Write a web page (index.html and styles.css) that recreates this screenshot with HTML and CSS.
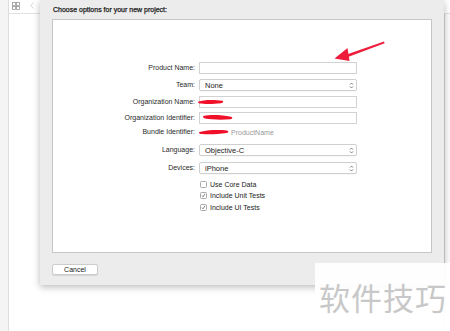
FILE: index.html
```html
<!DOCTYPE html>
<html>
<head>
<meta charset="utf-8">
<link rel="stylesheet" href="styles.css">
</head>
<body>
<div class="app">
  <div class="sidebar"></div>
  <div class="main">
    <div class="toolbar">
      <svg class="grid-icon" width="8" height="8" viewBox="0 0 8 8"><rect x="0.5" y="0.5" width="3" height="3" fill="none" stroke="#9a9a9a" stroke-width="0.8"/><rect x="4.5" y="0.5" width="3" height="3" fill="none" stroke="#9a9a9a" stroke-width="0.8"/><rect x="0.5" y="4.5" width="3" height="3" fill="none" stroke="#9a9a9a" stroke-width="0.8"/><rect x="4.5" y="4.5" width="3" height="3" fill="none" stroke="#9a9a9a" stroke-width="0.8"/></svg>
      <svg class="back-icon" width="4" height="7" viewBox="0 0 4 7"><path d="M3.5 0.5 L0.8 3.5 L3.5 6.5" fill="none" stroke="#cfcfcf" stroke-width="0.9"/></svg>
    </div>
    <div class="content">
      <div class="pane"></div>
      <div class="right-pane"></div>
    </div>
  </div>
</div>

<div class="sheet">
  <div class="sheet-title">Choose options for your new project:</div>
  <div class="options">
    <div class="form">
      <label class="lbl">Product Name:</label>
      <div class="field"></div>

      <label class="lbl">Team:</label>
      <div class="popup"><span>None</span><svg class="updown" width="5" height="7" viewBox="0 0 5 7"><path d="M1 2.6 L2.5 1 L4 2.6 M1 4.4 L2.5 6 L4 4.4" fill="none" stroke="#555" stroke-width="0.7"/></svg></div>

      <label class="lbl">Organization Name:</label>
      <div class="field scribbled"><svg class="scribble s1" width="28" height="8" viewBox="0 0 28 8"><path d="M1.5 3.6 C6 1.6 18 1.6 25.5 2.8 C27 3.6 26 5 24 5.2 C16 6.2 6 6 2.5 5.4 C1 5.1 0.8 4.2 1.5 3.6 Z" fill="#f0102a"/></svg></div>

      <label class="lbl">Organization Identifier:</label>
      <div class="field scribbled"><svg class="scribble s2" width="32" height="9" viewBox="0 0 32 9"><path d="M1.5 3 C8 1.4 20 1.8 29 3.8 C31 4.4 30.5 6 28.5 6.2 C20 7 9 6.6 3 5.6 C1 5.2 0.6 3.6 1.5 3 Z" fill="#f0102a"/></svg></div>

      <label class="lbl">Bundle Identifier:</label>
      <div class="bundle"><svg class="scribble-inline" width="32" height="8" viewBox="0 0 32 8"><path d="M1.5 4 C8 1.8 20 1.5 29 2.4 C31 3 30.6 4.6 28.6 5 C20 6.4 9 6.4 3 6 C1 5.8 0.6 4.6 1.5 4 Z" fill="#f0102a"/></svg><span class="bundle-name">ProductName</span></div>

      <label class="lbl">Language:</label>
      <div class="popup"><span>Objective-C</span><svg class="updown" width="5" height="7" viewBox="0 0 5 7"><path d="M1 2.6 L2.5 1 L4 2.6 M1 4.4 L2.5 6 L4 4.4" fill="none" stroke="#555" stroke-width="0.7"/></svg></div>

      <label class="lbl">Devices:</label>
      <div class="popup"><span>iPhone</span><svg class="updown" width="5" height="7" viewBox="0 0 5 7"><path d="M1 2.6 L2.5 1 L4 2.6 M1 4.4 L2.5 6 L4 4.4" fill="none" stroke="#555" stroke-width="0.7"/></svg></div>

      <span class="spacer"></span>
      <div class="check"><span class="box"></span><span>Use Core Data</span></div>

      <span class="spacer"></span>
      <div class="check"><span class="box"><svg width="7" height="7" viewBox="0 0 7 7"><path d="M1.5 3.6 L2.9 5.4 L5.6 1" fill="none" stroke="#333" stroke-width="0.8"/></svg></span><span>Include Unit Tests</span></div>

      <span class="spacer"></span>
      <div class="check"><span class="box"><svg width="7" height="7" viewBox="0 0 7 7"><path d="M1.5 3.6 L2.9 5.4 L5.6 1" fill="none" stroke="#333" stroke-width="0.8"/></svg></span><span>Include UI Tests</span></div>
    </div>
  </div>
  <div class="sheet-footer">
    <button class="btn">Cancel</button>
  </div>
  <svg class="arrow" width="56" height="24" viewBox="0 0 56 24"><path d="M52 2.5 L14 15.8 L14.6 18.6 L52.6 4.2 Z" fill="#ee1c3a"/><path d="M2.5 19.5 L15.5 9 L17.5 22 Z" fill="#ee1c3a"/></svg>
</div>

<div class="watermark">软件技巧</div>
</body>
</html>
```

FILE: styles.css
```css
* { box-sizing: border-box; }
html, body {
  margin: 0;
  padding: 0;
}
body {
  width: 450px;
  height: 331px;
  overflow: hidden;
  background: #ffffff;
  font-family: "Liberation Sans", Arial, sans-serif;
  color: #222;
  position: relative;
}
.app {
  display: flex;
  height: 331px;
}
.sidebar {
  width: 9px;
  background: #f4f4f4;
  border-right: 1px solid #dedede;
}
.main {
  flex: 1;
  display: flex;
  flex-direction: column;
}
.toolbar {
  height: 14px;
  border-bottom: 1px solid #e2e2e2;
  display: flex;
  align-items: center;
  padding-left: 3px;
  gap: 10px;
}
.grid-icon { margin-top: -2px; }
.back-icon { margin-top: -2px; }
.content {
  flex: 1;
  display: flex;
}
.pane { flex: 1; }
.right-pane {
  width: 6px;
  border-left: 1px solid #d4d4d4;
  background: #fbfbfb;
}

/* Sheet */
.sheet {
  position: absolute;
  left: 40px;
  top: 0;
  width: 404px;
  height: 285px;
  background: #ececec;
  box-shadow: 0 2px 7px rgba(0, 0, 0, 0.28);
  padding: 0 12px;
  display: flex;
  flex-direction: column;
}
.sheet-title {
  height: 19px;
  font-size: 7px;
  line-height: 19px;
  padding-left: 1px;
  font-weight: 400;
  color: #1a1a1a;
  -webkit-text-stroke: 0.25px #1a1a1a;
}
.options {
  height: 234px;
  background: #fff;
  border: 1px solid #c6c6c6;
  padding-top: 42px;
}
.form {
  display: grid;
  grid-template-columns: 142px 158px;
  column-gap: 4px;
  grid-template-rows: 17px 17px 16px 14px 18px 18px 18px 11px 12px 11px;
}
.lbl {
  font-size: 7px;
  line-height: 12px;
  text-align: right;
  color: #2a2a2a;
  align-self: start;
}
.field {
  height: 12px;
  border: 1px solid #d2d2d2;
  background: #fff;
  position: relative;
}
.scribble { position: absolute; }
.s1 { left: -3px; top: 1px; }
.s2 { left: 2px; top: 0px; }
.popup {
  height: 12px;
  border: 1px solid #cfcfcf;
  border-radius: 2px;
  background: #fff;
  display: flex;
  align-items: center;
  justify-content: space-between;
  padding: 0 2px 0 5px;
  font-size: 7.5px;
  color: #222;
  box-shadow: 0 0.5px 0.5px rgba(0,0,0,0.06);
}
.updown { display: block; }
.bundle {
  height: 12px;
  display: flex;
  align-items: center;
  font-size: 7px;
}
.scribble-inline { display: block; margin-left: -1px; margin-right: 1px; }
.bundle-name { color: #9a9a9a; }
.spacer { display: block; }
.check {
  display: flex;
  align-items: center;
  gap: 3px;
  font-size: 7px;
  height: 8px;
  padding-left: 1px;
}
.box {
  width: 7px;
  height: 7px;
  border: 0.8px solid #a9a9a9;
  border-radius: 1.5px;
  background: #fff;
  display: flex;
  align-items: center;
  justify-content: center;
}
.box svg { display: block; }
.sheet-footer {
  padding-top: 11px;
}
.btn {
  display: block;
  width: 46px;
  height: 11px;
  padding: 0;
  margin: 0;
  font-family: "Liberation Sans", Arial, sans-serif;
  font-size: 7px;
  line-height: 9px;
  color: #222;
  background: #fff;
  border: 1px solid #cbcbcb;
  border-radius: 2.5px;
  box-shadow: 0 0.5px 1px rgba(0,0,0,0.1);
}
.arrow {
  position: absolute;
  left: 292px;
  top: 39px;
}

/* Watermark overlay */
.watermark {
  position: absolute;
  left: 315px;
  top: 263px;
  width: 135px;
  height: 68px;
  background: rgba(255, 255, 255, 0.93);
  font-family: "Noto Sans CJK SC", sans-serif;
  font-size: 31px;
  line-height: 1;
  color: #c8c8c8;
  padding: 18px 0 0 4px;
  letter-spacing: 1px;
  white-space: nowrap;
}
```
